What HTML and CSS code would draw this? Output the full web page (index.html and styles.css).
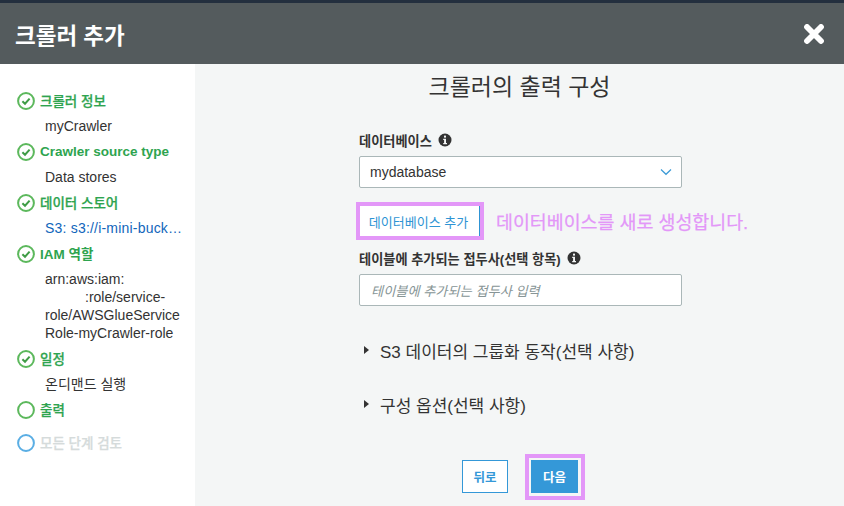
FILE: index.html
```html
<!DOCTYPE html>
<html lang="ko">
<head>
<meta charset="utf-8">
<title>크롤러 추가</title>
<link rel="stylesheet" href="styles.css">
</head>
<body>
<div class="topline"></div>
<header class="header">
  <h1 class="header-title">크롤러 추가</h1>
  <svg class="close" viewBox="0 0 20 20" aria-hidden="true"><path d="M3 3 L17 17 M17 3 L3 17"/></svg>
</header>
<div class="body">
  <aside class="sidebar">
    <div class="step ko"><svg class="ico" viewBox="0 0 18 18"><circle cx="9" cy="9" r="7.9"/><path d="M5.4 9.2 L8 11.7 L12.6 6.6"/></svg><span>크롤러 정보</span></div>
    <div class="sub">myCrawler</div>
    <div class="step"><svg class="ico" viewBox="0 0 18 18"><circle cx="9" cy="9" r="7.9"/><path d="M5.4 9.2 L8 11.7 L12.6 6.6"/></svg><span>Crawler source type</span></div>
    <div class="sub">Data stores</div>
    <div class="step ko"><svg class="ico" viewBox="0 0 18 18"><circle cx="9" cy="9" r="7.9"/><path d="M5.4 9.2 L8 11.7 L12.6 6.6"/></svg><span>데이터 스토어</span></div>
    <div class="sub link">S3: s3://i-mini-buck…</div>
    <div class="step"><svg class="ico" viewBox="0 0 18 18"><circle cx="9" cy="9" r="7.9"/><path d="M5.4 9.2 L8 11.7 L12.6 6.6"/></svg><span>IAM 역할</span></div>
    <div class="sub multi">arn:aws:iam:<br><span class="indent">:role/service-</span><br>role/AWSGlueService<br>Role-myCrawler-role</div>
    <div class="step ko"><svg class="ico" viewBox="0 0 18 18"><circle cx="9" cy="9" r="7.9"/><path d="M5.4 9.2 L8 11.7 L12.6 6.6"/></svg><span>일정</span></div>
    <div class="sub">온디맨드 실행</div>
    <div class="step ko"><svg class="ico" viewBox="0 0 18 18"><circle cx="9" cy="9" r="7.9"/></svg><span>출력</span></div>
    <div class="step ko step-next"><svg class="ico ico-blue" viewBox="0 0 18 18"><circle cx="9" cy="9" r="7.9"/></svg><span>모든 단계 검토</span></div>
  </aside>
  <main class="main">
    <h2 class="title">크롤러의 출력 구성</h2>
    <div class="form">
      <label class="label">데이터베이스 <svg class="info" viewBox="0 0 14 14"><circle cx="7" cy="7" r="6.5"/><rect class="info-i" x="6" y="2.6" width="2" height="2"/><path class="info-i" d="M5.2 5.8H8V10H9V11.3H5.2V10H6.1V7.1H5.2Z"/></svg></label>
      <div class="select"><span>mydatabase</span><svg class="chev" viewBox="0 0 12 8"><path d="M1 1.5 L6 6.3 L11 1.5"/></svg></div>
      <div class="add-row">
        <button class="add-btn">데이터베이스 추가</button>
        <span class="note">데이터베이스를 새로 생성합니다.</span>
      </div>
      <label class="label label-2">테이블에 추가되는 접두사(선택 항목) <svg class="info" viewBox="0 0 14 14"><circle cx="7" cy="7" r="6.5"/><rect class="info-i" x="6" y="2.6" width="2" height="2"/><path class="info-i" d="M5.2 5.8H8V10H9V11.3H5.2V10H6.1V7.1H5.2Z"/></svg></label>
      <div class="input">테이블에 추가되는 접두사 입력</div>
      <div class="expander first"><span class="tri"></span>S3 데이터의 그룹화 동작(선택 사항)</div>
      <div class="expander second"><span class="tri"></span>구성 옵션(선택 사항)</div>
    </div>
    <div class="actions">
      <button class="back">뒤로</button>
      <div class="next-wrap"><button class="next">다음</button></div>
    </div>
  </main>
</div>
</body>
</html>
```
FILE: styles.css
```css
* { box-sizing: border-box; }
html, body { margin: 0; padding: 0; }
body {
  width: 844px;
  height: 506px;
  overflow: hidden;
  display: flex;
  flex-direction: column;
  font-family: "Liberation Sans", "Noto Sans CJK KR", sans-serif;
  color: #333;
  background: #f4f6f6;
}
.topline { height: 3px; background: #232f3e; }
.header {
  height: 61px;
  background: #545b5d;
  display: flex;
  align-items: center;
  justify-content: space-between;
  padding: 0 20px 0 15px;
}
.header-title { margin: 0; font-size: 22.5px; font-weight: 700; color: #fff; }
.close { width: 20px; height: 20px; }
.close path { fill: none; stroke: #fff; stroke-width: 5.8; stroke-linecap: round; }
.body { flex: 1; display: flex; min-height: 0; }
.sidebar {
  width: 195px;
  background: #fff;
  padding: 28px 0 0 17px;
  font-size: 14px;
  flex: none;
}
.step {
  height: 18px;
  display: flex;
  align-items: center;
  gap: 5px;
  color: #2ea44f;
  font-weight: 700;
  font-size: 13.5px;
  white-space: nowrap;
}
.ko { font-weight: 500; -webkit-text-stroke: 0.25px currentColor; }
.step span { position: relative; top: -1px; }
.ico { width: 18px; height: 18px; flex: none; }
.ico circle { fill: none; stroke: #5cb85c; stroke-width: 2; }
.ico path { fill: none; stroke: #3f9c46; stroke-width: 2; }
.ico-blue circle { stroke: #5aaee4; }
.step-next { color: #d5dbdb; margin-top: 15px; }
.sub {
  margin-left: 28px;
  line-height: 18px;
  padding: 7px 0 8px;
  height: 33px;
  white-space: nowrap;
}
.link { color: #1166bb; letter-spacing: 0.2px; }
.multi { height: auto; }
.indent { padding-left: 40px; }
.main { flex: 1; position: relative; display: flex; flex-direction: column; }
.title {
  margin: 7px 0 0;
  text-align: center;
  font-size: 23px;
  font-weight: 400;
  line-height: 32px;
  color: #333;
  width: 649px;
}
.form { margin-left: 164px; width: 323px; margin-top: 27px; }
.label {
  display: flex;
  align-items: center;
  gap: 6px;
  height: 20px;
  font-size: 13.2px;
  font-weight: 700;
  color: #333;
  white-space: nowrap;
}
.label-2 { margin-top: 8px; }
.info { width: 14px; height: 14px; flex: none; }
.info circle { fill: #333; }
.info-i { fill: #f4f6f6; }
.select {
  margin-top: 6px;
  height: 32px;
  border: 1px solid #aab7b8;
  border-radius: 2px;
  background: #fff;
  display: flex;
  align-items: center;
  justify-content: space-between;
  padding: 0 9px 0 10px;
  font-size: 14px;
}
.chev { width: 12px; height: 8px; }
.chev path { fill: none; stroke: #3b9ad6; stroke-width: 1.2; }
.add-row { display: flex; align-items: center; margin: 14px 0 0 -3px; gap: 13px; height: 38px; white-space: nowrap; }
.add-btn {
  flex: none;
  width: 128px;
  height: 38px;
  border: 4px solid #e397f8;
  background: #fff;
  color: #2e94d4;
  font: 13px "Liberation Sans", "Noto Sans CJK KR", sans-serif;
  padding: 0 3px 0 0;
  box-shadow: inset -1px 0 0 #2e94d4;
}
.note { font-size: 18.4px; color: #e397f8; -webkit-text-stroke: 0.25px currentColor; position: relative; left: -1px; }
.input {
  margin-top: 6px;
  height: 32px;
  border: 1px solid #aab7b8;
  border-radius: 2px;
  background: #fff;
  display: flex;
  align-items: center;
  padding: 0 11px;
  font-size: 13.2px;
  font-style: italic;
  color: #879596;
}
.expander { display: flex; align-items: center; font-size: 17px; color: #333; height: 24px; white-space: nowrap; }
.first { margin-top: 32px; }
.second { margin-top: 30px; }
.tri {
  width: 0;
  height: 0;
  border-left: 5px solid #333;
  border-top: 4.5px solid transparent;
  border-bottom: 4.5px solid transparent;
  margin: 0 11px 0 5px;
}
.actions { margin-top: 38px; margin-left: 267px; display: flex; align-items: flex-start; gap: 17px; }
.back {
  width: 46px;
  height: 33px;
  margin-top: 6px;
  background: #fff;
  border: 1px solid #3498d8;
  color: #3498d8;
  font: 700 12.5px "Liberation Sans", "Noto Sans CJK KR", sans-serif;
  padding: 0;
}
.next-wrap { border: 4px solid #e397f8; padding: 2px 3px 3px 2px; width: 60px; height: 46px; display: flex; }
.next {
  flex: 1;
  background: #3498d8;
  border: 0;
  color: #fff;
  font: 700 12.5px "Liberation Sans", "Noto Sans CJK KR", sans-serif;
  padding: 0;
}
```
